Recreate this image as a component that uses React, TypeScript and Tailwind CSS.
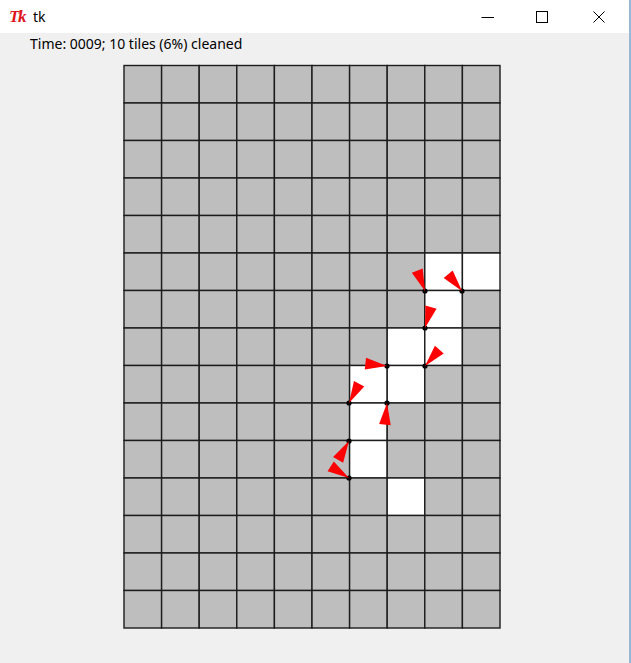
import React from "react";

// grid geometry measured from the reference (page pixels)
const X0 = 124;
const Y0 = 65.5;
const CW = 37.6;
const CH = 37.5;
const COLS = 10;
const ROWS = 15;

const CLEAN: [number, number][] = [
  [5, 8], [5, 9], [6, 8], [7, 7], [7, 8], [8, 6], [8, 7], [9, 6], [10, 6], [11, 7],
];

// robot position + vector from tip toward the triangle's base
const ROBOTS: { x: number; y: number; dx: number; dy: number }[] = [
  { x: 425, y: 291, dx: -8, dy: -21 },
  { x: 462, y: 291, dx: -14, dy: -17 },
  { x: 425, y: 328, dx: 6, dy: -21 },
  { x: 425, y: 366, dx: 14, dy: -16 },
  { x: 387, y: 366, dx: -22, dy: -2.4 },
  { x: 349, y: 403, dx: 10, dy: -19 },
  { x: 387, y: 403, dx: -2, dy: 21 },
  { x: 349, y: 441, dx: -11, dy: 19 },
  { x: 349, y: 478, dx: -18, dy: -11.5 },
];

function robotPoly(r: { x: number; y: number; dx: number; dy: number }) {
  const a = Math.atan2(r.dy, r.dx);
  const d = 22.5;
  const s = (15 * Math.PI) / 180;
  const p2 = [r.x + d * Math.cos(a + s), r.y + d * Math.sin(a + s)];
  const p3 = [r.x + d * Math.cos(a - s), r.y + d * Math.sin(a - s)];
  return `${r.x},${r.y} ${p2[0]},${p2[1]} ${p3[0]},${p3[1]}`;
}

function RoomCanvas() {
  const isClean = (r: number, c: number) => CLEAN.some(([a, b]) => a === r && b === c);
  const tiles = [];
  for (let r = 0; r < ROWS; r++) {
    for (let c = 0; c < COLS; c++) {
      tiles.push(
        <rect
          key={`${r}-${c}`}
          x={X0 + c * CW}
          y={Y0 + r * CH}
          width={CW}
          height={CH}
          fill={isClean(r, c) ? "#ffffff" : "#bebebe"}
          stroke="#1c1c1c"
          strokeWidth={1.4}
        />
      );
    }
  }
  return (
    <svg width={378} height={566} viewBox="123 64 378 566" className="block ml-[123px]">
      {tiles}
      {ROBOTS.map((r, i) => (
        <g key={i}>
          <circle cx={r.x} cy={r.y} r={2.6} fill="#000" />
          <polygon points={robotPoly(r)} fill="#ff0000" />
        </g>
      ))}
    </svg>
  );
}

function TitleBar() {
  return (
    <div className="h-[33px] bg-white flex items-center relative">
      <span className="ml-[9px] text-[#e0141c] italic font-bold text-[17px] leading-none tracking-[-1.5px] font-['Liberation_Serif',serif]">
        Tk
      </span>
      <span className="ml-[8px] text-[14px] text-black font-['Noto_Sans',sans-serif]">tk</span>
      <div className="ml-auto flex items-center h-full">
        <svg width="13" height="12" viewBox="0 0 13 12" className="mr-[42px]">
          <line x1="0.5" y1="6.5" x2="13" y2="6.5" stroke="#000" strokeWidth="1" />
        </svg>
        <svg width="12" height="12" viewBox="0 0 12 12" className="mr-[45px]">
          <rect x="0.5" y="0.5" width="11" height="11" fill="none" stroke="#000" strokeWidth="1" />
        </svg>
        <svg width="12" height="12" viewBox="0 0 12 12" className="mr-[24px]">
          <path d="M0.5 0.5 L11.5 11.5 M11.5 0.5 L0.5 11.5" stroke="#000" strokeWidth="1" />
        </svg>
      </div>
    </div>
  );
}

export default function App() {
  return (
    <div className="w-[631px] h-[663px] bg-[#f0f0f0] border-r-2 border-[#9bb8d3] overflow-hidden">
      <TitleBar />
      <div className="h-[21px] pl-[30px] pt-[1px] text-[14px] leading-[19px] text-black font-['Noto_Sans',sans-serif]">
        Time: 0009; 10 tiles (6%) cleaned
      </div>
      <div className="mt-[10px]">
        <RoomCanvas />
      </div>
    </div>
  );
}
